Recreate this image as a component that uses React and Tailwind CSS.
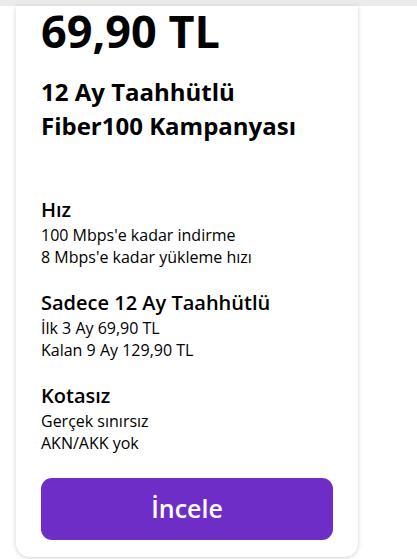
const features = [
  {
    title: "Hız",
    lines: ["100 Mbps'e kadar indirme", "8 Mbps'e kadar yükleme hızı"],
  },
  {
    title: "Sadece 12 Ay Taahhütlü",
    lines: ["İlk 3 Ay 69,90 TL", "Kalan 9 Ay 129,90 TL"],
  },
  {
    title: "Kotasız",
    lines: ["Gerçek sınırsız", "AKN/AKK yok"],
  },
];

const App = () => {
  return (
    <div className="min-h-[559px] bg-white font-['Open_Sans',sans-serif] text-black overflow-hidden">
      {/* top strip */}
      <div className="h-[6px] bg-[#ecebe9]"></div>

      <div className="pl-[16px]">
        <div className="w-[342px] bg-white rounded-b-[14px] shadow-[0_1px_5px_rgba(0,0,0,0.18)] px-[25px] pt-[2px] pb-[17px]">
          <div className="text-[45px] font-bold leading-[45px]">69,90 TL</div>

          <h2 className="mt-[22px] text-[24px] font-bold leading-[34px]">
            12 Ay Taahhütlü
            <br />
            Fiber100 Kampanyası
          </h2>

          <div className="mt-[53px] flex flex-col gap-[21px]">
            {features.map((f) => (
              <div key={f.title}>
                <div className="text-[20px] font-semibold leading-[28px]">
                  {f.title}
                </div>
                <div className="text-[16px] leading-[22px]">
                  {f.lines.map((l) => (
                    <div key={l}>{l}</div>
                  ))}
                </div>
              </div>
            ))}
          </div>

          <button className="mt-[24px] w-full h-[62px] rounded-[11px] bg-[#6f2dc8] text-white text-[25px] font-semibold">
            İncele
          </button>
        </div>
      </div>
    </div>
  );
};

export default App;
